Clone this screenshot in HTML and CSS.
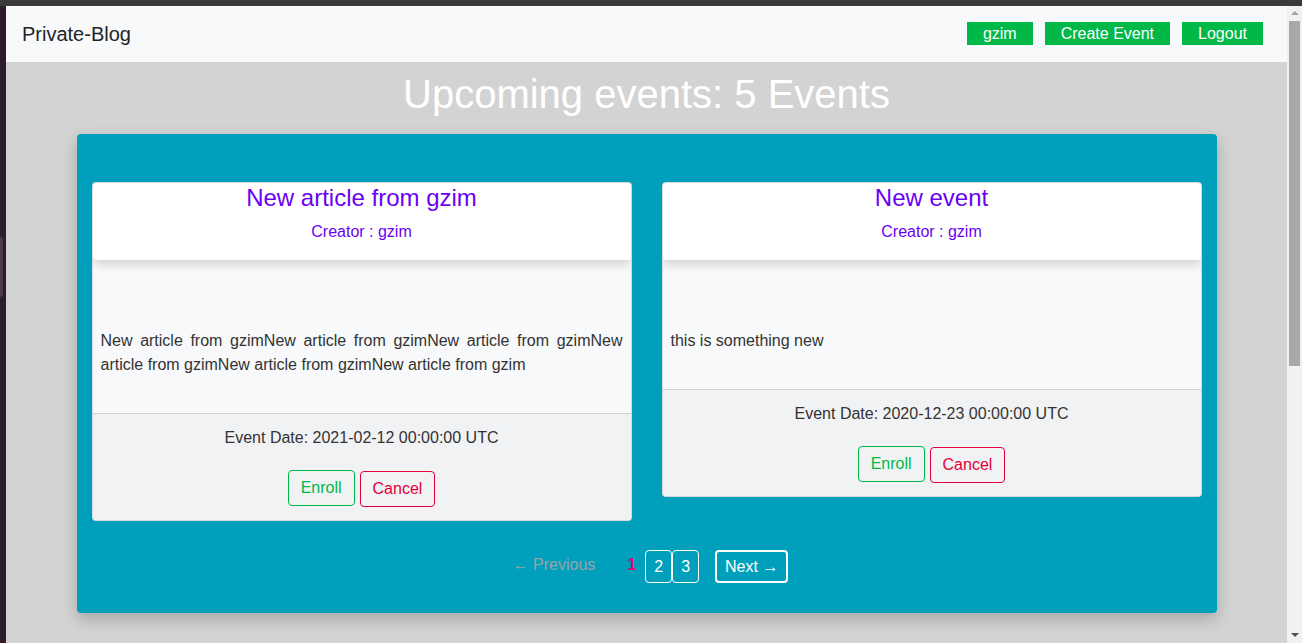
FILE: index.html
```html
<!DOCTYPE html>
<html lang="en">
<head>
<meta charset="utf-8">
<title>Private-Blog</title>
<link rel="stylesheet" href="styles.css">
</head>
<body>
<div class="topbar"></div>
<div class="frame">
  <div class="leftstrip"><div class="handle"></div></div>
  <div class="viewport">
    <nav class="navbar">
      <a class="brand">Private-Blog</a>
      <div class="nav-actions">
        <a class="nav-btn">gzim</a>
        <a class="nav-btn">Create Event</a>
        <a class="nav-btn">Logout</a>
      </div>
    </nav>
    <h1 class="page-title">Upcoming events: 5 Events</h1>
    <section class="events">
      <div class="cards">
        <div class="card">
          <div class="card-head">
            <h3 class="card-title">New article from gzim</h3>
            <p class="creator">Creator : gzim</p>
          </div>
          <div class="card-body">
            <p class="desc">New article from gzimNew article from gzimNew article from gzimNew article from gzimNew article from gzimNew article from gzim</p>
          </div>
          <div class="card-foot">
            <p class="date">Event Date: 2021-02-12 00:00:00 UTC</p>
            <div class="actions">
              <button class="btn enroll">Enroll</button>
              <button class="btn cancel">Cancel</button>
            </div>
          </div>
        </div>
        <div class="card">
          <div class="card-head">
            <h3 class="card-title">New event</h3>
            <p class="creator">Creator : gzim</p>
          </div>
          <div class="card-body">
            <p class="desc">this is something new</p>
          </div>
          <div class="card-foot">
            <p class="date">Event Date: 2020-12-23 00:00:00 UTC</p>
            <div class="actions">
              <button class="btn enroll">Enroll</button>
              <button class="btn cancel">Cancel</button>
            </div>
          </div>
        </div>
      </div>
      <div class="pagination">
        <span class="prev">← Previous</span>
        <span class="current">1</span>
        <a class="page">2</a>
        <a class="page">3</a>
        <a class="next">Next →</a>
      </div>
    </section>
  </div>
  <div class="scrollbar">
    <div class="arrow up"></div>
    <div class="thumb"></div>
    <div class="track"></div>
    <div class="arrow down"></div>
  </div>
</div>
</body>
</html>
```
FILE: styles.css
```css
* { box-sizing: border-box; }
html, body { margin: 0; height: 100%; overflow: hidden; }
body {
  font-family: "Liberation Sans", Arial, Helvetica, sans-serif;
  font-size: 16px;
  line-height: 1.5;
  color: #212529;
  background: #3b3b3b;
  display: flex;
  flex-direction: column;
}
.topbar { height: 6px; background: #3a3a3a; flex: none; }
.frame { flex: 1; display: flex; min-height: 0; }
.leftstrip {
  width: 6px; flex: none; background: #2e1b2c; position: relative;
}
.handle {
  position: absolute; left: 0; top: 231px; width: 3px; height: 60px;
  background: #4e3a4c; border-radius: 0 3px 3px 0;
}
.viewport { flex: 1; background: #d3d3d3; display: flex; flex-direction: column; min-width: 0; }

.navbar {
  height: 56px; background: #f8f9fa; display: flex; align-items: center;
  justify-content: space-between; padding: 0 24px 2px 16px; flex: none;
}
.brand { font-size: 20px; color: #212529; line-height: 30px; margin-top: 2px; }
.nav-actions { display: flex; gap: 12px; }
.nav-btn {
  background: #00b848; color: #fff; height: 23px; line-height: 23px;
  padding: 0 16px; font-size: 16px;
}

.page-title {
  margin: 8px 0 16px; text-align: center; color: #fff; font-weight: 400;
  font-size: 40px; line-height: 48px;
}

.events {
  width: 1140px; margin: 0 auto; background: #00a0bc; border-radius: 4px;
  padding: 48px 15px 30px;
  box-shadow: 0 6px 16px rgba(0,0,0,0.22);
}
.cards { display: flex; gap: 30px; align-items: flex-start; }
.card {
  width: 540px; background: #f8f9fa; border: 1px solid rgba(0,0,0,0.13);
  border-radius: 4px; overflow: hidden;
}
.card-head {
  background: #fff; text-align: center; border-radius: 4px;
  box-shadow: 0 5px 10px rgba(0,0,0,0.14);
  position: relative;
}
.card-title {
  margin: 0 0 8px; font-size: 24px; font-weight: 400; line-height: 29px; color: #6a00f4;
}
.creator { margin: 0; padding-bottom: 16px; color: #6a00f4; line-height: 24px; }
.card-body { padding: 69px 8px 36px; }
.desc { margin: 0; text-align: justify; color: #333; }
.card-foot {
  background: #f1f2f3; border-top: 1px solid rgba(0,0,0,0.13);
  padding: 12px 0 13px; text-align: center;
}
.date { margin: 0 0 20px; color: #333; }
.actions { display: flex; justify-content: center; gap: 5px; align-items: flex-start; }
.btn {
  font-family: inherit; font-size: 16px; line-height: 24px; background: transparent;
  border-radius: 4px; padding: 5px 12px; height: 36px;
}
.enroll { border: 1px solid #00b848; color: #00b848; }
.cancel { border: 1px solid #e0003c; color: #e0003c; margin-top: 1px; }

.pagination {
  display: flex; justify-content: center; align-items: center; margin-top: 29px;
  color: #fff; padding-left: 8px;
}
.prev { color: #9aa3a8; margin-right: 32px; margin-top: -3px; }
.current { color: #e6007e; font-weight: 700; margin-right: 9px; margin-top: -3px; }
.page {
  border: 1px solid #fff; border-radius: 4px; padding: 3px 8px; line-height: 25px;
}
.next {
  margin-left: 16px; border: 2px solid #fff; border-radius: 4px; padding: 2px 8px; line-height: 25px;
}

.scrollbar {
  width: 15px; flex: none; background: #f1f1f1; display: flex; flex-direction: column;
  align-items: center;
}
.arrow { width: 0; height: 0; border-left: 4px solid transparent; border-right: 4px solid transparent; }
.arrow.up { border-bottom: 4px solid #a3a3a3; margin: 5px 0 6px; }
.thumb { width: 11px; height: 345px; background: #a8a8a8; }
.track { flex: 1; }
.arrow.down { border-top: 4px solid #505050; margin: 0 0 6px; }
```
